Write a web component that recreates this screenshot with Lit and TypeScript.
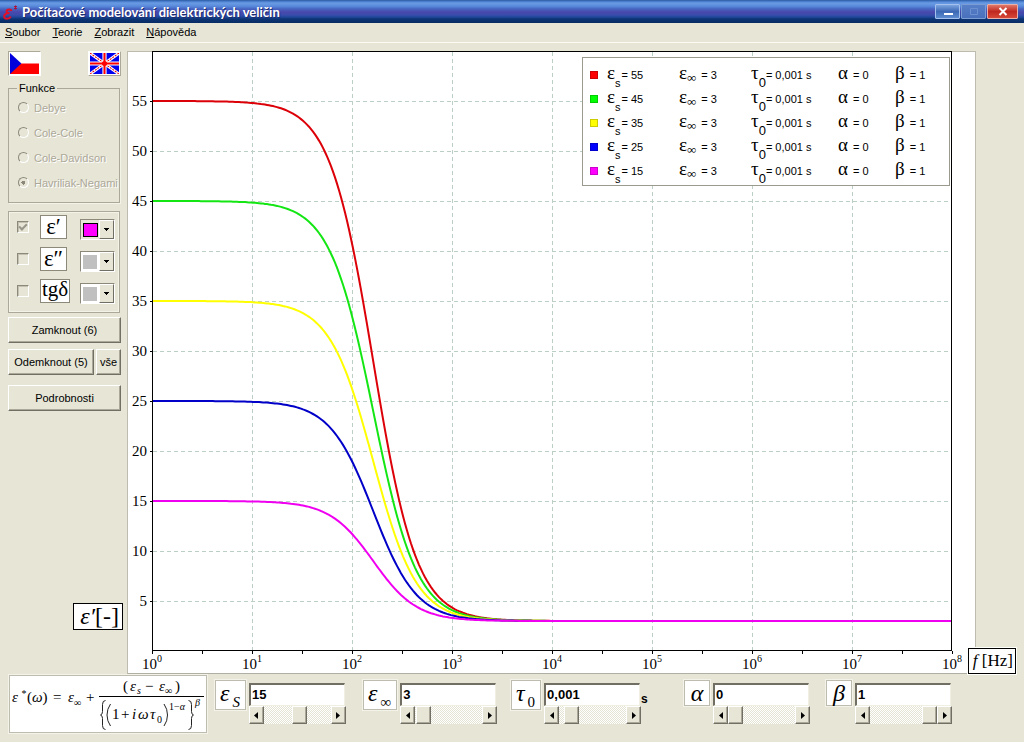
import { LitElement, html, svg, css } from "lit";
import { customElement, property } from "lit/decorators.js";

const SERIES = [
  { es: 55, color: "#dc0008", swatch: "#ff0000" },
  { es: 45, color: "#14e614", swatch: "#00ff00" },
  { es: 35, color: "#ffff00", swatch: "#ffff00" },
  { es: 25, color: "#0000c8", swatch: "#0000ff" },
  { es: 15, color: "#f000f0", swatch: "#ff00ff" },
];

const TAU = 0.001;
const EPS_INF = 3;

/* Plot area inside the chart drawing. */
const LEFT = 25;
const TOP = 1;
const RIGHT = 824;
const BOTTOM = 600;
const DECADE = 100;
const UNIT = 10;

function curve(es: number): string {
  const points: string[] = [];
  for (let x = 0; x <= RIGHT - LEFT; x += 2) {
    const wt = 2 * Math.PI * Math.pow(10, x / DECADE) * TAU;
    const e = EPS_INF + (es - EPS_INF) / (1 + wt * wt);
    points.push(`${LEFT + x},${(BOTTOM - e * UNIT).toFixed(1)}`);
  }
  return points.join(" ");
}

@customElement("debye-chart")
export class DebyeChart extends LitElement {
  static styles = css`
    :host { display: block; position: relative; }
    .panel { background: #fff; border: 1px solid #bdbcae; border-bottom-color: #b0afa4; }
    .plot { display: block; width: 100%; height: auto; margin-top: -1px; }
    .grid { stroke: #bccfc4; stroke-width: 1; stroke-dasharray: 4 3; }
    .axis { stroke: #000; stroke-width: 1; fill: none; }
    .tick { font: 15px "Liberation Serif", serif; fill: #000; }
    .power { font: 10px "Liberation Serif", serif; fill: #000; }
    .curve { fill: none; stroke-width: 2; }
    .legend {
      position: absolute; top: 6px; right: 26px; box-sizing: border-box; width: 368px;
      background: #fff; border: 1px solid #9c9a8c; padding: 5px 0 2px 7px;
      font: 11px/24px "Liberation Sans", sans-serif;
    }
    .row { display: grid; grid-template-columns: 17px 72px 72px 87px 57px 1fr; height: 24px; align-items: center; white-space: nowrap; }
    .swatch { width: 8px; height: 8px; box-sizing: border-box; border: 1px solid #0003; }
    .item { display: flex; align-items: baseline; }
    .sym { font: 19px/20px "Liberation Serif", serif; }
    .sub { font-size: 11px; line-height: 8px; position: relative; top: 8px; margin-right: 1px; }
    .zero { font-size: 13px; margin-right: 0; }
    .inf { font: 13px/8px "Liberation Serif", serif; position: relative; top: 3px; margin-right: 5px; }
    .gap { margin-left: 3px; }
    .wide { margin-left: 5px; }
    .freq {
      position: absolute; right: -40px; bottom: 0; border: 1px solid #000; outline: 1px solid #fffffb; background: #fff;
      font: 17px/24px "Liberation Serif", serif; padding: 0 2px 0 4px; white-space: nowrap;
    }
  `;

  render() {
    const vertical = [1, 2, 3, 4, 5, 6, 7];
    const decades = [0, 1, 2, 3, 4, 5, 6, 7, 8];
    const levels = [5, 10, 15, 20, 25, 30, 35, 40, 45, 50, 55];
    return html`
      <div class="panel">
        <svg class="plot" viewBox="0 0 847 622" role="img" aria-label="ε′ [-], f [Hz]">
          ${vertical.map((d) => svg`<line class="grid" x1=${LEFT + d * DECADE - 0.5} x2=${LEFT + d * DECADE - 0.5} y1=${TOP} y2=${BOTTOM}></line>`)}
          ${levels.map((v) => svg`<line class="grid" x1=${LEFT} x2=${RIGHT} y1=${BOTTOM - v * UNIT + 0.5} y2=${BOTTOM - v * UNIT + 0.5}></line>`)}
          <rect class="axis" x=${LEFT - 0.5} y="0.5" width=${RIGHT - LEFT} height=${BOTTOM - 1}></rect>
          ${levels.map((v) => svg`
            <line class="axis" x1=${LEFT - 3} x2=${LEFT} y1=${BOTTOM - v * UNIT + 0.5} y2=${BOTTOM - v * UNIT + 0.5}></line>
            <text class="tick" text-anchor="end" x="19" y=${BOTTOM - v * UNIT + 5}>${v}</text>`)}
          ${decades.map((d) => svg`
            <line class="axis" x1=${LEFT + d * DECADE - 0.5} x2=${LEFT + d * DECADE - 0.5} y1=${BOTTOM} y2=${BOTTOM + 3}></line>
            ${d < 8 ? svg`<line class="axis" x1=${LEFT + d * DECADE + 49.5} x2=${LEFT + d * DECADE + 49.5} y1=${BOTTOM} y2=${BOTTOM + 3}></line>` : ""}
            <text class="tick" x=${LEFT + d * DECADE - 11} y="618">10</text>
            <text class="power" x=${LEFT + d * DECADE + 4} y="611">${d}</text>`)}
          ${SERIES.map((s) => svg`<polyline class="curve" stroke=${s.color} points=${curve(s.es)}></polyline>`)}
        </svg>
      </div>
      <div class="legend">
        ${SERIES.map((s) => html`
          <div class="row">
            <span class="swatch" style="background:${s.swatch}"></span>
            <span class="item"><span class="sym">ε</span><span class="sub">s</span>= ${s.es}</span>
            <span class="item"><span class="sym">ε</span><span class="inf">∞</span>= 3</span>
            <span class="item"><span class="sym">τ</span><span class="sub zero">0</span>= 0,001 s</span>
            <span class="item"><span class="sym">α</span><span class="wide">= 0</span></span>
            <span class="item"><span class="sym">β</span><span class="wide">= 1</span></span>
          </div>`)}
      </div>
      <div class="freq"><i>f</i> [Hz]</div>
    `;
  }
}

@customElement("param-control")
export class ParamControl extends LitElement {
  @property() symbol = "";
  @property() sub = "";
  @property() value = "";
  @property() unit = "";
  @property({ type: Number }) position = 0;

  static styles = css`
    :host { display: flex; align-items: flex-start; gap: 3px; }
    .name {
      background: #fff; border: 1px solid #bdbcae; outline: 1px solid #f4f3ea; box-sizing: border-box;
      min-width: 26px; height: 26px; padding: 0 4px; text-align: center; white-space: nowrap;
      font: italic 24px/24px "Liberation Serif", serif;
    }
    .tall { height: 30px; padding: 0 5px 0 4px; }
    .sub { font-size: 15px; line-height: 1px; position: relative; top: 6px; margin-left: 3px; }
    .upright { font-style: normal; }
    .box { width: 97px; margin-top: 3px; }
    .text {
      display: block; box-sizing: border-box; width: 96px; height: 23px; padding: 0 1px 2px; background: #fff; color: #000;
      border: solid; border-width: 2px 1px 1px 2px; border-color: #716f64 #f1efe2 #f1efe2 #716f64; border-radius: 0;
      font: bold 13px "Liberation Sans", sans-serif; outline: none;
    }
    .scroll {
      display: grid; grid-template-columns: 15px 1fr 15px; height: 18px;
      background: repeating-conic-gradient(#fff 0 25%, #e4e3d4 0 50%) 0 0 / 2px 2px;
    }
    .arrow {
      box-sizing: border-box; padding: 0; border: 1px solid; border-color: #fff #716f64 #716f64 #fff; background: #e6e5d6;
      box-shadow: inset -1px -1px #aca899; display: grid; place-items: center;
    }
    .slider { appearance: none; -webkit-appearance: none; margin: 0; width: 100%; min-width: 0; height: 18px; background: transparent; outline: none; }
    .slider::-webkit-slider-thumb {
      -webkit-appearance: none; width: 15px; height: 18px; border: 1px solid; border-color: #fff #716f64 #716f64 #fff;
      box-sizing: border-box; background: #e6e5d6; box-shadow: inset -1px -1px #aca899; border-radius: 0;
    }
    .unit { font: bold 12px/14px "Liberation Sans", sans-serif; margin: 12px 0 0 -3px; }
  `;

  render() {
    return html`
      <label class="name ${this.sub ? "tall" : ""}" for="v">${this.symbol}${this.sub ? html`<span class="sub ${this.sub === "0" ? "upright" : ""}">${this.sub}</span>` : ""}</label>
      <div class="box">
        <input class="text" id="v" type="text" .value=${this.value} />
        <div class="scroll">
          <button class="arrow" aria-label="−"><svg width="4" height="7" viewBox="0 0 4 7"><path d="M4 0v7L0 3.500z"/></svg></button>
          <input class="slider" type="range" aria-label=${this.symbol} min="0" max="100" .value=${String(this.position)} />
          <button class="arrow" aria-label="+"><svg width="4" height="7" viewBox="0 0 4 7"><path d="M0 0v7L4 3.500z"/></svg></button>
        </div>
      </div>
      ${this.unit ? html`<span class="unit">${this.unit}</span>` : ""}
    `;
  }
}

@customElement("app-root")
export class AppRoot extends LitElement {
  static styles = css`
    :host { display: flex; flex-direction: column; min-height: 100vh; background: #e6e5d6; color: #000; font: 11px/14px "Liberation Sans", sans-serif; }
    .title {
      display: flex; align-items: center; height: 23px; padding: 0 6px 0 3px; box-sizing: border-box;
      background: linear-gradient(#2c5a9c 0, #3f74c4 1px, #6a9ce4 3px, #5a8cdc 6px, #4664c0 9px, #4a48ac 12px, #3a4cac 15px, #20489c 17px, #0c3474 19px, #082c64 23px);
    }
    .logo { width: 17px; height: 18px; margin-right: 2px; }
    .caption { margin: 0; flex: 1; color: #fff; font: bold 13px/20px Lato, sans-serif; text-shadow: 1px 1px #1c2c6c; white-space: nowrap; }
    .controls { display: flex; height: 15px; gap: 1px; border-radius: 2px; }
    .ctl { box-sizing: border-box; width: 25px; height: 15px; padding: 0; border: 1px solid #a4c0ec; border-radius: 1px; background: linear-gradient(#7ca4e0, #3c68b4 50%, #5c8cd0); display: grid; place-items: center; }
    .dim { border-color: #7c9cd4; background: linear-gradient(#5880c8, #4870bc); }
    .close { width: 31px; border-color: #e8b0a8; background: linear-gradient(#e07868, #c02820 50%, #d84838); }
    .menu { display: flex; gap: 12px; height: 19px; padding-left: 5px; border-bottom: 1px solid #fbfbf4; font: 11px/19px "Liberation Sans", sans-serif; }
    .menu a { color: #000; text-decoration: none; }
    .main { display: flex; padding-top: 8px; }
    .side { width: 113px; margin: 0 6px 0 8px; flex: none; display: flex; flex-direction: column; }
    .chart { flex: 1; min-width: 0; margin-right: 48px; }
    .flags { display: flex; justify-content: space-between; height: 26px; }
    .flag { box-sizing: border-box; width: 33px; height: 25px; padding: 1px; border: 1px solid; border-color: #fff #aca899 #aca899 #fff; background: #fff; display: block; }
    .on { border-color: #aca899 #fff #fff #aca899; }
    .flag svg { display: block; width: 100%; height: 100%; }
    .group { margin: 4px 0 0; padding: 6px 0 6px 9px; border: 1px solid #aca899; outline: 1px solid #f4f3e8; outline-offset: -2px; box-sizing: border-box; width: 112px; min-width: 0; }
    .functions { height: 122px; padding-top: 2px; outline: none; box-shadow: 1px 1px #f4f3e8; }
    .group legend { padding: 0 2px; margin-left: -1px; font-size: 11px; line-height: 14px; }
    .option { display: flex; align-items: center; height: 25px; gap: 5px; color: #aca899; text-shadow: 1px 1px #fff; white-space: nowrap; }
    .functions .option:first-of-type { margin-top: -2px; }
    .radio {
      appearance: none; -webkit-appearance: none; margin: 0; flex: none; width: 11px; height: 11px; box-sizing: border-box; border-radius: 50%;
      border: 1px solid; border-color: #8c897a #fff #fff #8c897a;
    }
    .radio:checked { background: radial-gradient(circle, #8c897a 2px, transparent 2px); }
    .quantities { margin-top: 8px; padding: 3px 0 9px 8px; box-shadow: none; }
    .quantity { display: grid; grid-template-columns: 23px 1fr 39px; height: 24px; margin-bottom: 8px; align-items: start; }
    .quantity:last-child { margin-bottom: 0; }
    .check {
      appearance: none; -webkit-appearance: none; margin: 6px 0 0; width: 12px; height: 12px; box-sizing: border-box; border: 1px solid;
      border-color: #8c897a #fff #fff #8c897a; box-shadow: inset 1px 1px #c4c1b0; display: grid; place-items: center;
    }
    .check:checked::before { content: ""; width: 6px; height: 3px; border: solid #98958a; border-width: 0 0 2px 2px; transform: rotate(-45deg) translate(1px, -1px); }
    .sym { justify-self: start; box-sizing: border-box; min-width: 27px; height: 24px; border: 1px solid #8c897a; background: #fff; text-align: center; font: 23px/22px "Liberation Serif", serif; white-space: nowrap; }
    .word { font-size: 21px; padding: 0 1px; line-height: 19px; }
    .pick { position: relative; display: block; width: 35px; height: 21px; margin-top: 4px; }
    .pick::after {
      content: ""; position: absolute; right: 1px; top: 1px; width: 15px; height: 19px; box-sizing: border-box; pointer-events: none;
      border: 1px solid; border-color: #fff #716f64 #716f64 #fff; background: linear-gradient(#000, #000) 4px 7px / 5px 1px no-repeat, linear-gradient(#000, #000) 5px 8px / 3px 1px no-repeat, linear-gradient(#000, #000) 6px 9px / 1px 1px no-repeat, #e6e5d6;
    }
    .color { appearance: none; -webkit-appearance: none; box-sizing: border-box; width: 35px; height: 21px; padding: 0; border: 1px solid; border-color: #8c897a #fff #fff #8c897a; border-radius: 0; background: linear-gradient(#c0c0c0, #c0c0c0) 2px 3px / 14px 14px no-repeat, #fff; }
    .magenta { background: linear-gradient(#ff00ff, #ff00ff) 3px 4px / 13px 12px no-repeat, linear-gradient(#000, #000) 2px 3px / 15px 14px no-repeat, #e6e5d6; }
    .push {
      box-sizing: border-box; height: 26px; padding: 0 2px; border: 1px solid; border-color: #fff #716f64 #716f64 #fff; box-shadow: inset -1px -1px #aca899;
      background: #e6e5d6; color: #000; font: 11px/14px "Liberation Sans", sans-serif; white-space: nowrap;
    }
    .lock { margin-top: 4px; }
    .pair { display: grid; grid-template-columns: 86px 1fr; gap: 2px; margin: 6px 0 10px; }
    .axis { align-self: flex-end; margin: auto -2px 44px 0; background: #fff; border: 1px solid #000; padding: 0 3px 0 6px; font: 24px/25px "Liberation Serif", serif; white-space: nowrap; }
    .params { display: flex; padding: 1px 16px 8px 9px; align-items: flex-start; }
    .formula { flex: none; width: 196px; height: 56px; border: 1px solid #bdbcae; outline: 1px solid #f4f3ea; background: #fff; margin-right: 8px; }
    .formula text { font-family: "Liberation Serif", serif; font-style: italic; font-size: 15px; }
    .formula .up { font-style: normal; }
    .formula .small { font-size: 10px; }
    .fields { flex: 1; display: grid; grid-template-columns: 148fr 148fr 173fr 142fr 182fr; padding-top: 5px; }
  `;

  render() {
    return html`
      <header class="title">
        <svg class="logo" viewBox="0 0 17 18"><path d="M8.500 8C8 5.800 3.800 6 3.600 8.300C3.500 9.800 5 10.300 6.500 10.100C3.400 10 0.800 11.500 1.200 13.800C1.600 16.500 6.500 16.300 7.800 13.500" fill="none" stroke="#e01028" stroke-width="2"/><path d="M11 3l3 3M14 3l-3 3M12.500 2.500v4" stroke="#b01038" stroke-width="1"/></svg>
        <h1 class="caption">Počítačové modelování dielektrických veličin</h1>
        <div class="controls">
          <button class="ctl" aria-label="Minimalizovat"><svg width="10" height="9"><path d="M1 6h9v2H1z" fill="#fff"/></svg></button>
          <button class="ctl dim" aria-label="Maximalizovat" disabled><svg width="10" height="9"><path d="M1.500 1.500h7v6h-7z" fill="none" stroke="#6c90d0"/></svg></button>
          <button class="ctl close" aria-label="Zavřít"><svg width="10" height="9"><path d="M1.500 1l7 7M8.500 1l-7 7" stroke="#fff" stroke-width="2"/></svg></button>
        </div>
      </header>
      <nav class="menu">
        <a href="#"><u>S</u>oubor</a><a href="#"><u>T</u>eorie</a><a href="#"><u>Z</u>obrazit</a><a href="#"><u>N</u>ápověda</a>
      </nav>
      <main class="main">
        <aside class="side">
          <div class="flags">
            <button class="flag on" aria-label="Čeština"><svg viewBox="0 0 28 21" preserveAspectRatio="none"><path fill="#fff" d="M0 0h28v21H0z"/><path fill="#f00" d="M0 10.500h28V21H0z"/><path fill="#00d" d="M0 0l11 10.500L0 21z"/></svg></button>
            <button class="flag" aria-label="English"><svg viewBox="0 0 28 21" preserveAspectRatio="none"><path fill="#00e" d="M0 0h28v21H0z"/><path d="M0 0l28 21M28 0L0 21" stroke="#fff" stroke-width="3"/><path d="M0 0l28 21M28 0L0 21" stroke="#e00" stroke-width="1" stroke-dasharray="2 1"/><path d="M14 0v21M0 10.500h28" stroke="#fff" stroke-width="4"/><path d="M14 0v21M0 10.500h28" stroke="#f00" stroke-width="2"/><circle cx="14" cy="10.500" r="2.500" fill="#f00"/></svg></button>
          </div>
          <fieldset class="group functions">
            <legend>Funkce</legend>
            ${["Debye", "Cole-Cole", "Cole-Davidson", "Havriliak-Negami"].map((n, i) => html`
              <label class="option"><input class="radio" type="radio" name="fn" disabled ?checked=${i === 3} />${n}</label>`)}
          </fieldset>
          <div class="group quantities">
            ${["ε′", "ε″", "tgδ"].map((n, i) => html`
              <div class="quantity">
                <input class="check" id="q${i}" type="checkbox" ?checked=${i === 0} ?disabled=${i === 0} />
                <label class="sym ${i === 2 ? "word" : ""}" for="q${i}">${n}</label>
                <span class="pick"><select class="color ${i === 0 ? "magenta" : ""}" aria-label=${n}><option></option></select></span>
              </div>`)}
          </div>
          <button class="push lock">Zamknout (6)</button>
          <div class="pair"><button class="push">Odemknout (5)</button><button class="push">vše</button></div>
          <button class="push">Podrobnosti</button>
          <div class="axis"><i>ε′</i>[-]</div>
        </aside>
        <debye-chart class="chart"></debye-chart>
      </main>
      <footer class="params">
        <svg class="formula" viewBox="0 0 196 56">
          <text x="2" y="26">ε</text><text class="small" x="11" y="21">*</text><text x="17" y="26"><tspan class="up">(</tspan>ω<tspan class="up">)</tspan></text>
          <text class="up" x="43" y="26">=</text><text x="58" y="26">ε</text><text class="small" x="64" y="30">∞</text><text class="up" x="76" y="26">+</text>
          <path d="M89 20.500h105" stroke="#000"/>
          <text class="up" x="113" y="15">(</text><text x="120" y="15">ε</text><text class="small" x="127" y="18">s</text><text class="up" x="135" y="15">−</text><text x="149" y="15">ε</text><text class="small" x="155" y="18">∞</text><text class="up" x="165" y="15">)</text>
          <path d="M95.500 24.500q-3 0-3 4v7q0 3-2 3.500q2 0.500 2 3.500v7q0 4 3 4M178.500 24.500q3 0 3 4v7q0 3 2 3.500q-2 0.500-2 3.500v7q0 4-3 4M100.500 28q-3.500 5-3.500 11t3.500 11M154 28q3.500 5 3.500 11t-3.500 11" fill="none" stroke="#222"/>
          <text class="up" x="102" y="43">1</text><text class="up" x="111" y="43">+</text><text x="122" y="43">i</text><text x="128" y="43">ω</text><text x="140" y="43">τ</text><text class="small up" x="147" y="47">0</text>
          <text class="small" x="159" y="34"><tspan class="up">1−</tspan>α</text><text class="small" x="185" y="30">β</text>
        </svg>
        <div class="fields">
          <param-control symbol="ε" sub="S" value="15" position="54"></param-control>
          <param-control symbol="ε" sub="∞" value="3" position="2"></param-control>
          <param-control symbol="τ" sub="0" value="0,001" position="10" unit="s"></param-control>
          <param-control symbol="α" value="0" position="0"></param-control>
          <param-control symbol="β" value="1" position="100"></param-control>
        </div>
      </footer>
    `;
  }
}
